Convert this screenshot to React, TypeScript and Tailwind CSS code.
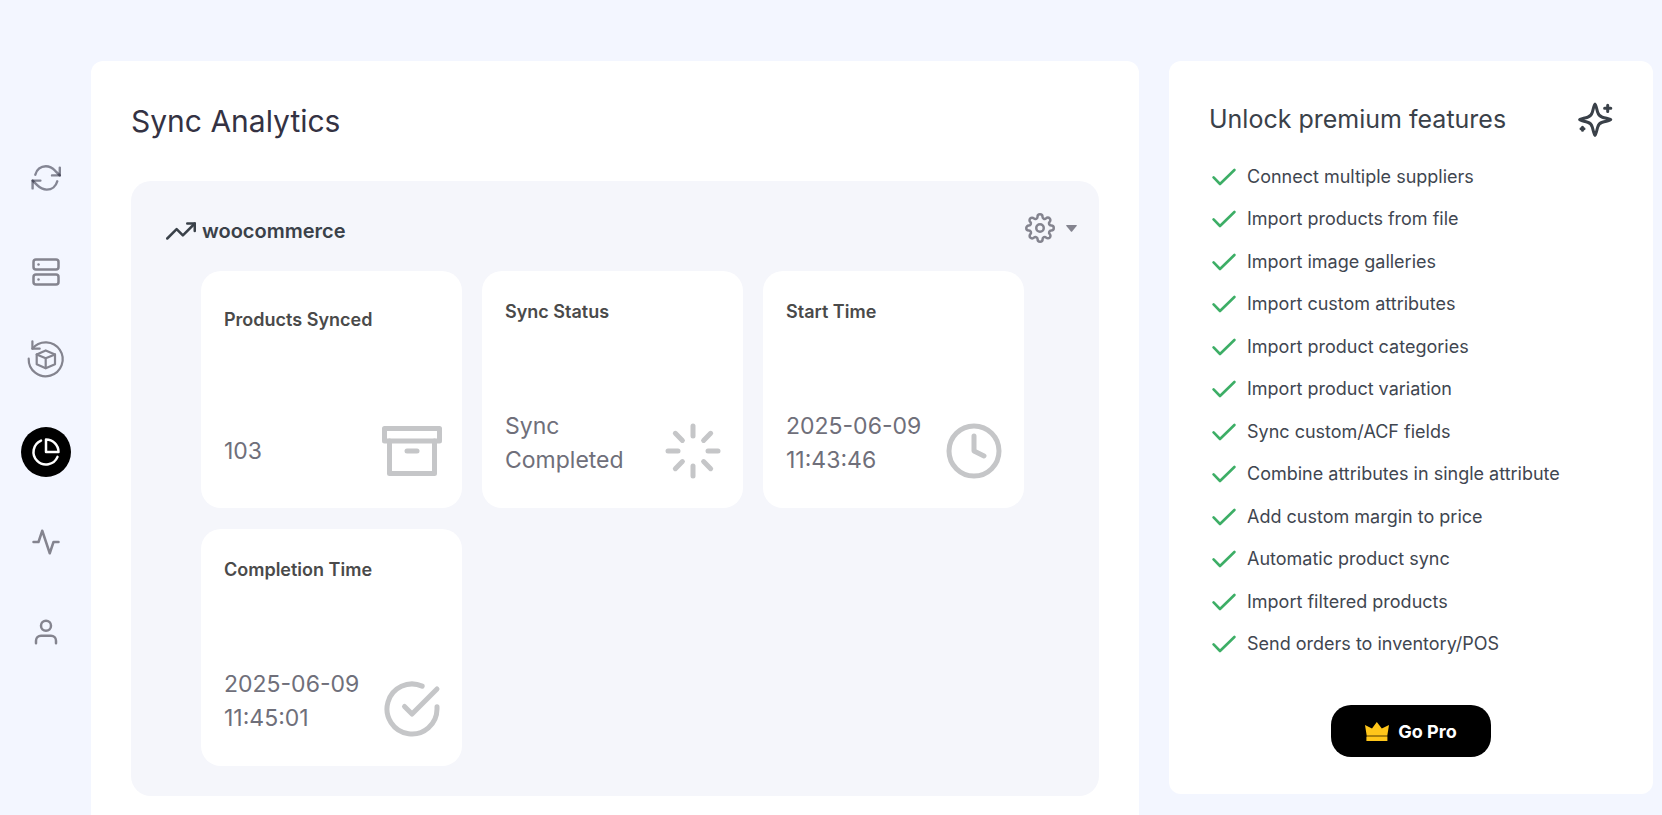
import { ReactNode } from "react"
import {
  FiActivity,
  FiArchive,
  FiCheckCircle,
  FiClock,
  FiLoader,
  FiPieChart,
  FiServer,
  FiSettings,
  FiTrendingUp,
  FiUser,
} from "react-icons/fi"
import clsx from "clsx"

const SyncIcon = () => (
  <svg
    viewBox="0 0 50 50"
    className="w-full h-full"
    fill="none"
    stroke="#15152a"
    strokeOpacity="0.5"
    strokeWidth="2.4"
    strokeLinecap="round"
    strokeLinejoin="round"
  >
    <path d="M14.3 17.7C15.6 12.6 19.8 9.2 24.8 9.2C29 9.2 31.8 11.2 34.2 13.8L38.8 18.4" />
    <path d="M38.8 10.6V18.4H31" />
    <path d="M36.3 24.3C35 29.2 30.8 32.6 25.8 32.6C21.6 32.6 18.8 30.8 16.2 28.2L11.6 23.6" />
    <path d="M11.6 31.4V23.6H19.4" />
  </svg>
)

const RestoreBoxIcon = () => (
  <svg
    viewBox="0 0 50 50"
    className="w-full h-full"
    fill="none"
    stroke="currentColor"
    strokeWidth="2.2"
    strokeLinecap="round"
    strokeLinejoin="round"
  >
    <path d="M7.7 21.7A17 17 0 1 0 11.4 11.7" />
    <path d="M11.4 4.3V11.7H18.7" />
    <path d="M24.7 13.4L34 17.4V27.2L24.7 31.2L15.7 27.2V17.4Z" />
    <path d="M15.7 17.4L24.7 21.2L34 17.4M24.7 21.2V31.2" />
  </svg>
)

const SparklesIcon = () => (
  <svg
    viewBox="0 0 35 35"
    className="w-[35px] h-[35px] shrink-0"
    fill="none"
    stroke="currentColor"
    strokeWidth="3"
    strokeLinecap="round"
    strokeLinejoin="round"
  >
    <path d="M17 2C17.8 2 18.7 7 19.7 10.4C20.6 13.5 21.4 14.3 24.4 15.2C28 16.3 32.8 16.9 32.8 17.7C32.8 18.5 28 19.2 24.4 20.3C21.4 21.2 20.6 22 19.7 25.1C18.7 28.5 17.8 33.4 17 33.4C16.2 33.4 15.3 28.5 14.3 25.1C13.4 22 12.6 21.2 9.6 20.3C6 19.2 1.6 18.5 1.6 17.7C1.6 16.9 6 16.3 9.6 15.2C12.6 14.3 13.4 13.5 14.3 10.4C15.3 7 16.2 2 17 2Z" />
    <path d="M29.7 3.2V9.4M26.6 6.3H32.8" />
    <path d="M4.5 25.2V28.2M3 26.7H6" />
  </svg>
)

const CheckIcon = () => (
  <svg
    viewBox="0 0 24 18"
    className="w-6 h-[18px] shrink-0"
    fill="none"
    stroke="#3dae66"
    strokeWidth="2.6"
    strokeLinecap="round"
    strokeLinejoin="round"
  >
    <path d="M1.6 9.4L8 16L22.4 2" />
  </svg>
)

const CrownIcon = () => (
  <svg viewBox="0 0 24 19" className="w-6 h-[19px] shrink-0" fill="#ffc61a">
    <path d="M0 3L7 6.6L11.8 0L16.8 6.6L24 3L22.4 13H1.6Z" />
    <path d="M1.6 13H22.4V15H1.6Z" fill="#a87f0c" />
    <path d="M1.4 15H22.4V19H1.4Z" />
  </svg>
)

const navItems: { label: string; icon: ReactNode; active?: boolean }[] = [
  { label: "Sync", icon: <SyncIcon /> },
  { label: "Suppliers", icon: <FiServer size={30} /> },
  { label: "Restore products", icon: <RestoreBoxIcon /> },
  { label: "Analytics", icon: <FiPieChart size={30} />, active: true },
  { label: "Activity", icon: <FiActivity size={30} /> },
  { label: "Account", icon: <FiUser size={30} /> },
]

const stats = [
  { title: "Products Synced", lines: ["103"], Icon: FiArchive },
  { title: "Sync Status", lines: ["Sync", "Completed"], Icon: FiLoader },
  { title: "Start Time", lines: ["2025-06-09", "11:43:46"], Icon: FiClock },
  {
    title: "Completion Time",
    lines: ["2025-06-09", "11:45:01"],
    Icon: FiCheckCircle,
  },
]

const features = [
  "Connect multiple suppliers",
  "Import products from file",
  "Import image galleries",
  "Import custom attributes",
  "Import product categories",
  "Import product variation",
  "Sync custom/ACF fields",
  "Combine attributes in single attribute",
  "Add custom margin to price",
  "Automatic product sync",
  "Import filtered products",
  "Send orders to inventory/POS",
]

const Sidebar = () => (
  <nav className="w-[91px] shrink-0 pt-[157px] pl-[21px] flex flex-col gap-10">
    {navItems.map(({ label, icon, active }) => (
      <a
        key={label}
        href="#"
        aria-label={label}
        className={clsx(
          "w-[50px] h-[50px] rounded-full flex items-center justify-center",
          active ? "bg-black text-white" : "text-[#84848f]"
        )}
      >
        {icon}
      </a>
    ))}
  </nav>
)

const StatCard = ({ title, lines, Icon }: (typeof stats)[number]) => {
  const multiline = lines.length > 1
  return (
    <div
      className={clsx(
        "min-h-[237px] bg-white rounded-[20px] pl-[23px] pr-5 pb-[15px] flex flex-col",
        multiline ? "pt-[31px]" : "pt-[39px]"
      )}
    >
      <h3 className="text-[18px] leading-5 font-semibold text-[#4a4a4a]">
        {title}
      </h3>
      <div className="mt-auto min-h-[84px] flex items-center justify-between">
        <p
          className={clsx(
            "text-[23px] leading-[34px] text-[#6f6f7a]",
            multiline && "mb-4"
          )}
        >
          {lines.map((line) => (
            <span key={line} className="block">
              {line}
            </span>
          ))}
        </p>
        <Icon size={60} className="shrink-0 text-[#c5c6c8]" />
      </div>
    </div>
  )
}

const Analytics = () => (
  <main className="flex-1 min-w-0 bg-white rounded-t-xl px-10 pt-10 pb-12">
    <h1 className="text-[30px] leading-10 text-[#343243]">Sync Analytics</h1>
    <section className="mt-10 bg-[#f5f6fb] rounded-[20px] pb-[30px]">
      <header className="h-[90px] pt-1 pl-[35px] pr-[22px] flex items-center justify-between">
        <h2 className="pt-1.5 flex items-center gap-1.5 text-[20px] leading-[30px] font-semibold text-[#3a4149]">
          <FiTrendingUp size={30} />
          woocommerce
        </h2>
        <button
          aria-label="Settings"
          className="flex items-center gap-[11px] text-[#84848f]"
        >
          <FiSettings size={30} />
          <svg viewBox="0 0 11 7" className="w-[11px] h-[7px]" fill="currentColor">
            <path d="M.8 0H10.2Q11.4 0 10.6 1L6.1 6.5Q5.5 7.2 4.9 6.5L.4 1Q-.4 0 .8 0Z" />
          </svg>
        </button>
      </header>
      <div className="pl-[70px] pr-[75px] grid grid-cols-3 gap-x-5 gap-y-[21px]">
        {stats.map((stat) => (
          <StatCard key={stat.title} {...stat} />
        ))}
      </div>
    </section>
  </main>
)

const Premium = () => (
  <aside className="w-[484px] min-h-[733px] shrink-0 self-start bg-white rounded-xl px-10 pt-10 pb-[37px] flex flex-col">
    <div className="flex items-center justify-between">
      <h2 className="text-[25px] leading-[36px] text-[#3a4149]">
        Unlock premium features
      </h2>
      <span className="text-[#3a4149]">
        <SparklesIcon />
      </span>
    </div>
    <ul className="mt-[26px] mb-[47px] flex-1 flex flex-col justify-between">
      {features.map((feature) => (
        <li
          key={feature}
          className="pl-[3px] flex items-center gap-[11px] text-[18px] leading-7 text-[#3f4650]"
        >
          <CheckIcon />
          {feature}
        </li>
      ))}
    </ul>
    <button className="w-40 h-[52px] mx-auto rounded-[20px] bg-black text-white text-[18px] font-bold flex items-center justify-center gap-[9px]">
      <CrownIcon />
      Go Pro
    </button>
  </aside>
)

export default function App() {
  return (
    <div className="min-h-screen bg-[#f3f6ff] flex pr-[9px] font-['Inter','Liberation_Sans',sans-serif]">
      <Sidebar />
      <div className="flex-1 min-w-0 pt-[61px] flex gap-[30px]">
        <Analytics />
        <Premium />
      </div>
    </div>
  )
}
